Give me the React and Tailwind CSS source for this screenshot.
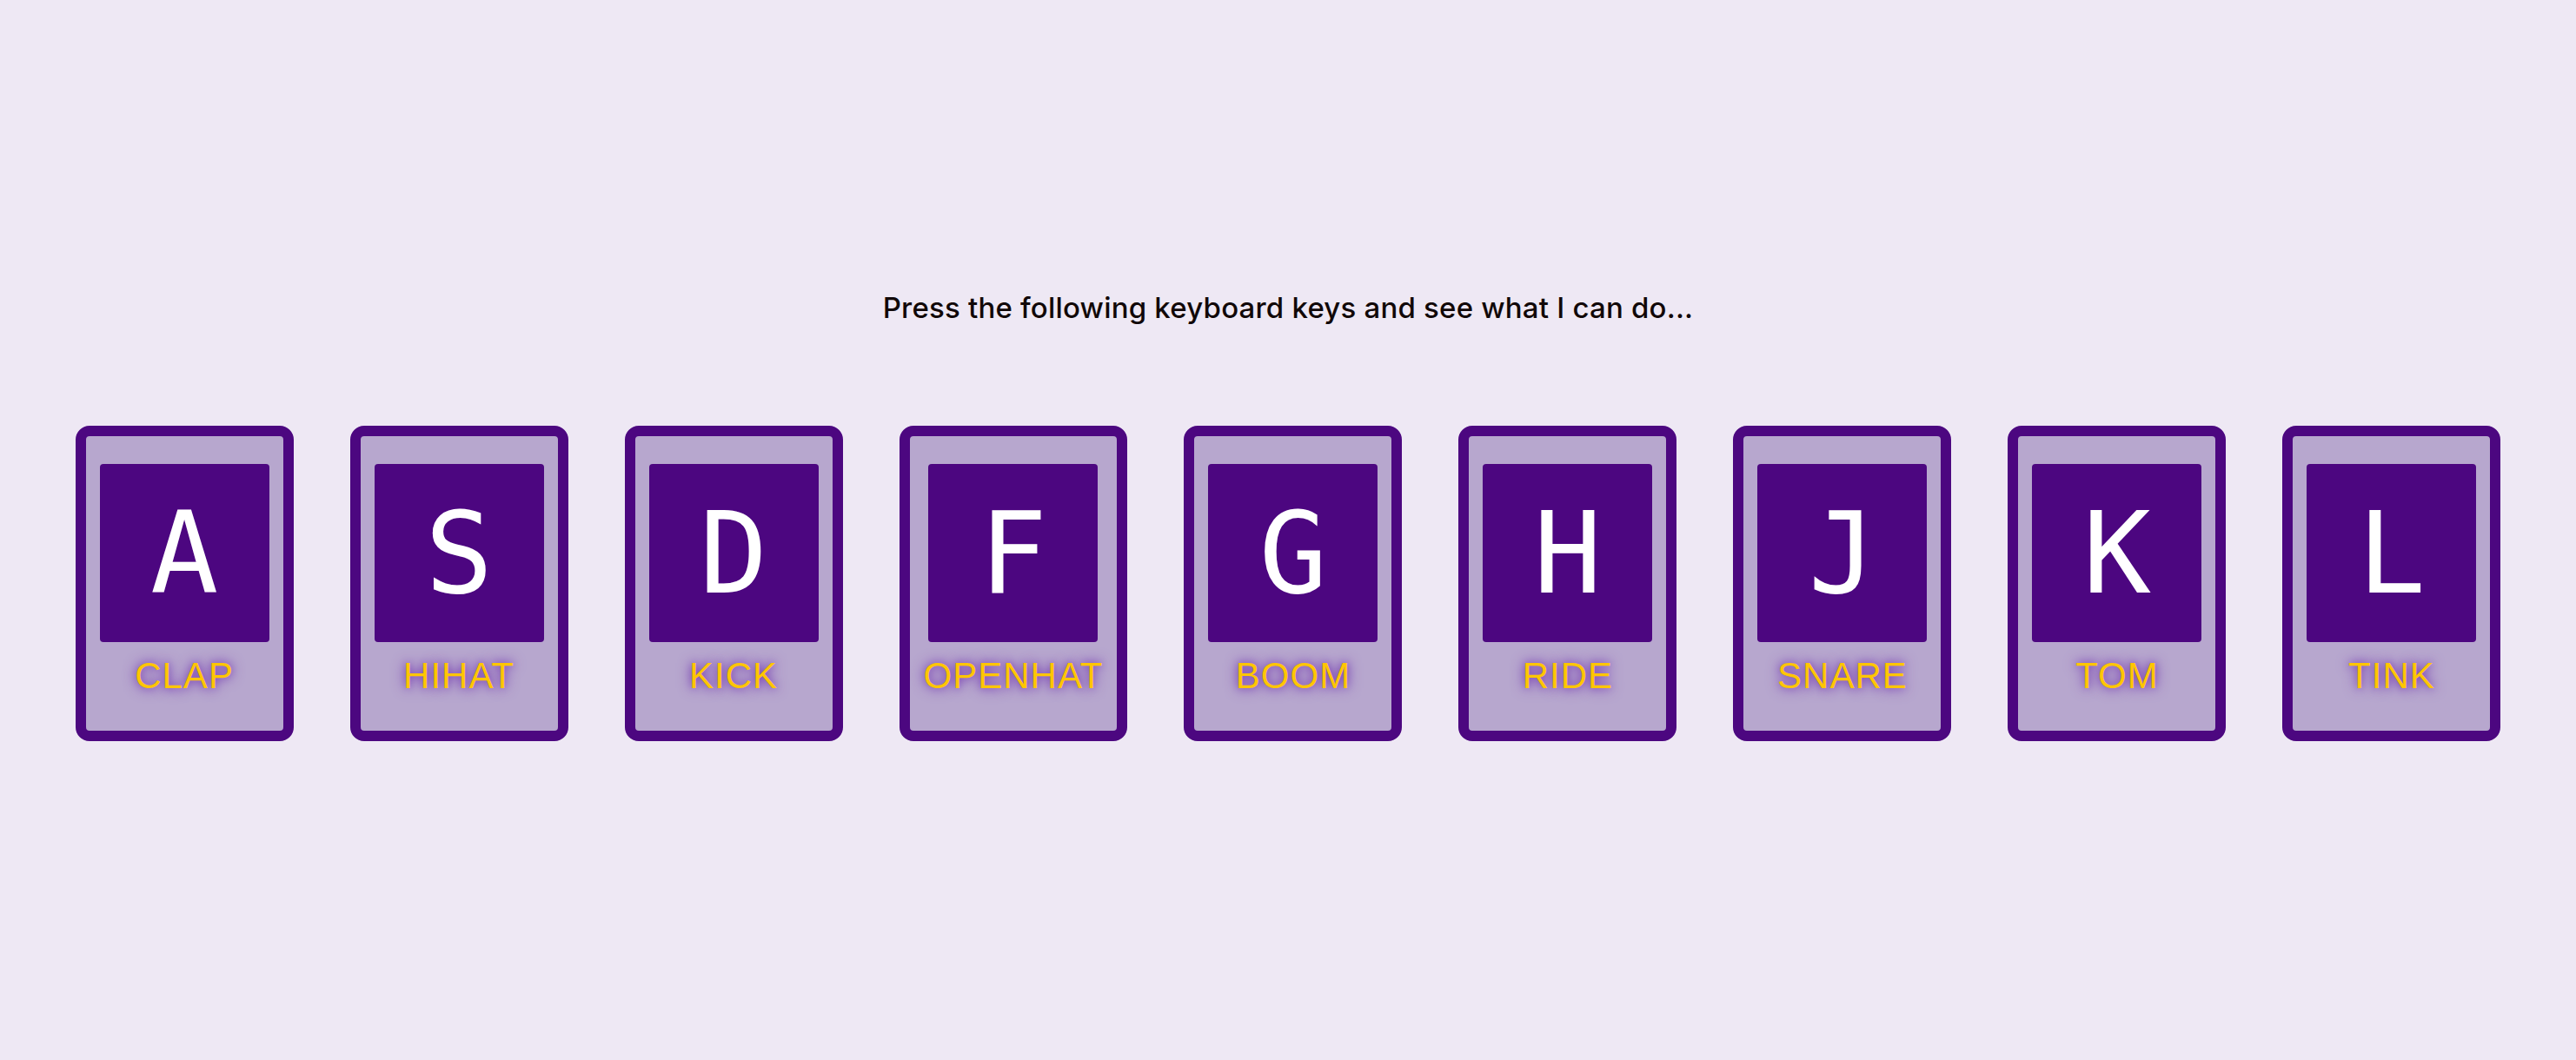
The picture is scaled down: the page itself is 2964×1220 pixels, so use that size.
import React from 'react';

const keys = [
  { key: 'A', sound: 'clap' },
  { key: 'S', sound: 'hihat' },
  { key: 'D', sound: 'kick' },
  { key: 'F', sound: 'openhat' },
  { key: 'G', sound: 'boom' },
  { key: 'H', sound: 'ride' },
  { key: 'J', sound: 'snare' },
  { key: 'K', sound: 'tom' },
  { key: 'L', sound: 'tink' },
];

function DrumKey({ letter, sound }) {
  return (
    <div className="flex flex-col items-center rounded-[16px] border-[12px] border-[#4c0780] bg-[#b7a7ce] px-4 pt-8 pb-10">
      <kbd className="flex h-[205px] w-[195px] items-center justify-center rounded-[4px] bg-[#4c0680] font-['DejaVu_Sans_Mono',monospace] text-[130px] leading-none text-white">
        {letter}
      </kbd>
      <span className="mt-4 font-['Liberation_Sans',Arial,sans-serif] text-[42px] leading-[46px] tracking-[1px] uppercase text-[#ffc600] [text-shadow:0_0_16px_#6a2aa8,0_0_8px_#8a5cbf]">
        {sound}
      </span>
    </div>
  );
}

export default function App() {
  return (
    <div className="min-h-[1220px] w-full bg-[#eee8f4] pt-[334px]">
      <h1 className="text-center font-['Inter',sans-serif] text-[33px] font-medium leading-[40px] tracking-[0.2px] text-[#110808]">
        Press the following keyboard keys and see what I can do...
      </h1>
      <div className="mt-[116px] flex justify-center gap-[65px]">
        {keys.map((item) => (
          <DrumKey key={item.key} letter={item.key} sound={item.sound} />
        ))}
      </div>
    </div>
  );
}
